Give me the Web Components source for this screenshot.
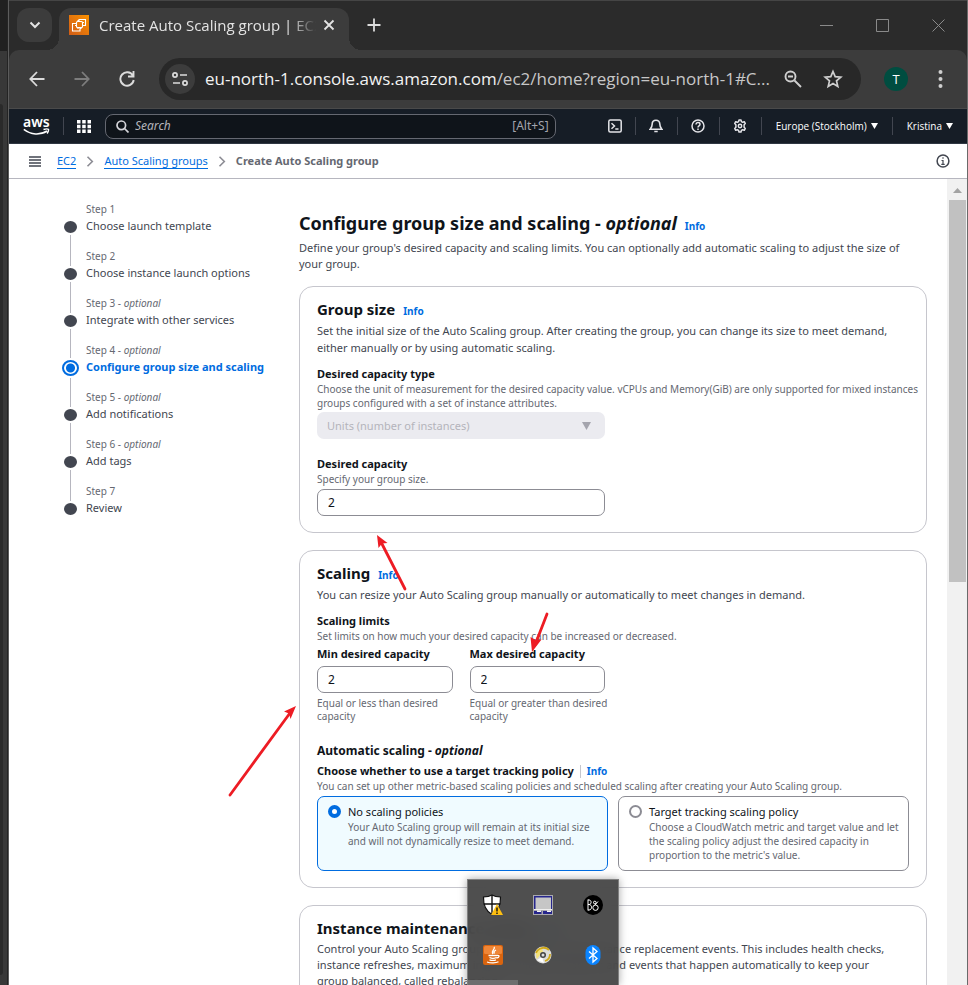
<!DOCTYPE html>
<html lang="en">
<head>
<meta charset="utf-8">
<title>Create Auto Scaling group | EC2</title>
<style>
  html, body { height: 100%; }
  body { margin: 0; overflow: hidden; background: #202020; font: 11px/16px "Noto Sans", "Open Sans", sans-serif; color: #424650; }
</style>
</head>
<body>
<desktop-scene></desktop-scene>

<script>
const define = (name, html, setup) => {
  const tpl = document.createElement('template');
  tpl.innerHTML = '<style>*{box-sizing:border-box} a{color:#006ce0;text-decoration:none} button{font:inherit;color:inherit;background:none;border:0;padding:0;margin:0;display:inline-flex;align-items:center;justify-content:center} svg{display:block;flex:none}</style>' + html;
  customElements.define(name, class extends HTMLElement {
    connectedCallback() {
      if (this.shadowRoot) return;
      const root = this.attachShadow({ mode: 'open' });
      root.append(tpl.content.cloneNode(true));
      if (setup) setup(this, root);
    }
  });
};

/* ---------- browser chrome ---------- */
define('tab-strip', `
<style>
  :host{display:flex;height:50px;background:#2b2b2b;color:#e3e3e3;border-top:1px solid #454545;align-items:flex-end;font:15px/20px "Open Sans",sans-serif}
  .list{width:35px;height:34px;border-radius:12px;background:#3c3c3c;margin:0 7px 8px 8px}
  .tab{position:relative;display:flex;align-items:center;width:290px;height:42px;background:#3c3c3c;border-radius:12px 12px 0 0;padding:0 14px 8px 10px}
  .tab::before,.tab::after{content:"";position:absolute;bottom:0;width:12px;height:12px}
  .tab::before{left:-12px;background:radial-gradient(circle at 0 0,transparent 12px,#3c3c3c 12px)}
  .tab::after{right:-12px;background:radial-gradient(circle at 100% 0,transparent 12px,#3c3c3c 12px)}
  .title{flex:1;margin-left:10px;white-space:nowrap;-webkit-mask-image:linear-gradient(90deg,#000 85%,transparent 97%)}
  .add{margin:0 0 18px 18px}
  .win{margin-left:auto;display:flex;gap:43px;padding:0 22px 18px 0}
</style>
<button class="list" aria-label="Search tabs"><svg width="12" height="8" viewBox="0 0 12 8" fill="none" stroke="#e3e3e3" stroke-width="2"><path d="M1.5 1.5 6 6l4.500-4.500"/></svg></button>
<div class="tab">
  <svg width="20" height="20" viewBox="0 0 20 20"><defs><linearGradient id="g" x1="0" y1="1" x2="1" y2="0"><stop stop-color="#d05c17"/><stop offset="1" stop-color="#fa9100"/></linearGradient></defs><path fill="url(#g)" d="M0 0h20v20H0z"/><g fill="none" stroke="#fff" stroke-width="1.100"><rect x="7.500" y="6.500" width="6" height="6" rx="1"/><path d="M10 6.500V4.500h6.500v6h-3M7.500 8.500h-4V16H11v-3.500M9 5v1.500M9 12.500V14M12 12.500V14M6 10.500h1.500M13.500 7.500H15"/></g></svg>
  <span class="title">Create Auto Scaling group | EC2</span>
  <button aria-label="Close tab"><svg width="12" height="12" viewBox="0 0 12 12" stroke="#e3e3e3" stroke-width="1.800"><path d="m1.500 1.500 9 9m0-9-9 9"/></svg></button>
</div>
<button class="add" aria-label="New tab"><svg width="14" height="14" viewBox="0 0 14 14" stroke="#dcdcdc" stroke-width="1.800"><path d="M7 .5v13M.5 7h13"/></svg></button>
<div class="win">
  <button aria-label="Minimize"><svg width="13" height="13" viewBox="0 0 13 13" stroke="#8a8a8a"><path d="M0 6.500h13"/></svg></button>
  <button aria-label="Maximize"><svg width="13" height="13" viewBox="0 0 13 13" fill="none" stroke="#8a8a8a"><path d="M.5.5h12v12H.5z"/></svg></button>
  <button aria-label="Close"><svg width="13" height="13" viewBox="0 0 13 13" stroke="#8a8a8a"><path d="m.5.5 12 12m0-12-12 12"/></svg></button>
</div>`);

define('address-bar', `
<style>
  :host{display:block;background:#2b2b2b}
  .bar{display:flex;align-items:center;height:59px;background:#3c3c3c;border-radius:10px 10px 0 0;padding:0 22px 1px 20px;border-bottom:1px solid #4a4a4a}
  .nav{display:flex;gap:29px;margin-right:24px}
  .box{flex:1;min-width:0;display:flex;align-items:center;height:42px;background:#282828;border-radius:21px;padding:0 18px 0 6px}
  .site{width:30px;height:30px;border-radius:15px;background:#3c3c3c;margin-right:10px;flex:none}
  .url{flex:1;min-width:0;white-space:nowrap;overflow:hidden;font:17px/26px "Open Sans",sans-serif;color:#c7c7c7}
  .url b{font-weight:400;color:#f2f2f2}
  .tools{display:flex;gap:21px;margin-left:8px}
  .who{width:24px;height:24px;border-radius:12px;background:#004d40;color:#fff;font:13px/24px "Open Sans",sans-serif;margin:0 28px 0 23px}
</style>
<div class="bar">
<div class="nav">
 <button aria-label="Back"><svg width="16" height="16" viewBox="0 0 16 16" fill="none" stroke="#dcdcdc" stroke-width="1.800"><path d="M15.500 8H1.500M8 1 1.300 8 8 15"/></svg></button>
 <button aria-label="Forward"><svg width="16" height="16" viewBox="0 0 16 16" fill="none" stroke="#7d7d7d" stroke-width="1.800"><path d="M.5 8h14M8 1l6.700 7L8 15"/></svg></button>
 <button aria-label="Reload"><svg width="16" height="16" viewBox="0 0 16 16" fill="none" stroke="#dcdcdc" stroke-width="1.900"><path d="M13.800 4.500A6.700 6.700 0 1 0 14.700 9M14.500 0v5.500H9"/></svg></button>
</div>
<div class="box">
 <button class="site" aria-label="Site information"><svg width="16" height="14" viewBox="0 0 16 14" fill="none" stroke="#dcdcdc" stroke-width="1.700"><circle cx="3" cy="3" r="2.100"/><path d="M8 3h7M1 11h7"/><circle cx="13" cy="11" r="2.100"/></svg></button>
 <span class="url"><b>eu-north-1.console.aws.amazon.com</b>/ec2/home?region=eu-north-1#C...</span>
 <div class="tools">
 <button aria-label="Zoom"><svg width="18" height="18" viewBox="0 0 18 18" fill="none" stroke="#cfcfcf" stroke-width="1.900"><circle cx="6.500" cy="6.500" r="5"/><path d="m10.500 10.500 6.500 6.500M4 6.500h5"/></svg></button>
 <button aria-label="Bookmark"><svg width="20" height="20" viewBox="0 0 20 20" fill="none" stroke="#cfcfcf" stroke-width="1.700"><path d="m10 2.500 2.200 5.200 5.600.5-4.300 3.700 1.300 5.500L10 14.500l-4.800 2.900 1.300-5.500-4.300-3.700 5.600-.5z"/></svg></button>
 </div>
</div>
<button class="who" aria-label="Profile">T</button>
<button aria-label="Menu"><svg width="9" height="18" viewBox="0 0 9 18" fill="#cfcfcf"><circle cx="4.500" cy="2" r="2"/><circle cx="4.500" cy="9" r="2"/><circle cx="4.500" cy="16" r="2"/></svg></button>
</div>`);

/* ---------- console header ---------- */
define('console-nav', `
<style>
  :host{display:flex;align-items:center;height:35px;background:#161d26;color:#fff;padding:0 14px 0 14px;border-bottom:1px solid #2f3742;font:500 10px/16px "Open Sans",sans-serif}
  .logo{width:27px;height:22px;color:#fff;font:600 14px/12px "Noto Sans",sans-serif}
  .logo span{display:block;margin-top:1px}
  .sep{width:1px;height:18px;background:#424650;flex:none}
  .grid{margin:0 14px 0 13px}
  .search{flex:1;min-width:0;display:flex;align-items:center;height:25px;border:1px solid #656871;border-radius:8px;background:#0f141a;padding:0 6px 0 10px;margin-right:45px;font-weight:400;color:#a4a4ad}
  input{flex:1;min-width:0;margin-left:6px;padding:0;border:0;outline:0;background:none;font:italic 12px/20px "Noto Sans",sans-serif;color:#b4b4bb}
  input::placeholder{color:#b4b4bb;opacity:1}
  kbd{font:12px/20px "Noto Sans",sans-serif}
  .ico{width:41px;height:20px}
  .drop{gap:4px;white-space:nowrap;height:20px}
  .region{margin:0 14px}
  .user{margin-left:14px}
</style>
<a class="logo" href="#" aria-label="AWS home"><span>aws</span><svg width="27" height="8" viewBox="0 0 27 8" fill="none" stroke="#fff" stroke-width="1.500"><path d="M.8 1.300C8 7 17 7.500 24 3M20.500 1.500c2-.6 4.200-.8 4.800-.2.500.7-.1 2.500-1.200 4.200"/></svg></a>
<i class="sep" style="margin-left:13px"></i>
<button class="grid" aria-label="Services"><svg width="14" height="13" viewBox="0 0 14 13" fill="#fff"><path d="M0 0h3.500v3.400H0zM5.200 0h3.500v3.400H5.200zM10.500 0H14v3.400h-3.500zM0 4.800h3.500v3.400H0zM5.200 4.800h3.500v3.400H5.200zM10.500 4.800H14v3.400h-3.500zM0 9.600h3.500V13H0zM5.200 9.600h3.500V13H5.200zM10.500 9.600H14V13h-3.500z"/></svg></button>
<label class="search"><svg width="13" height="13" viewBox="0 0 13 13" fill="none" stroke="#d5d5da" stroke-width="1.700"><circle cx="5.300" cy="5.300" r="4.300"/><path d="m8.500 8.500 4 4"/></svg><input type="search" placeholder="Search" aria-label="Search"><kbd>[Alt+S]</kbd></label>
<button class="ico" style="width:28px" aria-label="CloudShell"><svg width="14" height="14" viewBox="0 0 14 14" fill="none" stroke="#e4e4e8" stroke-width="1.500"><rect x=".8" y="1" width="12.400" height="12" rx="1.500"/><path d="m3.500 4.200 3 2.800-3 2.800M7.300 10h3.200"/></svg></button>
<i class="sep" style="margin-left:6px"></i>
<button class="ico" aria-label="Notifications"><svg width="14" height="14" viewBox="0 0 14 14" fill="none" stroke="#e4e4e8" stroke-width="1.600"><path d="M7 1.200c-2.300 0-3.800 1.600-3.800 3.800 0 2.500-.8 3.800-2 5.200h11.600c-1.200-1.400-2-2.700-2-5.200C10.800 2.800 9.300 1.200 7 1.200zM5.300 12.500h3.400"/></svg></button>
<i class="sep"></i>
<button class="ico" aria-label="Help"><svg width="14" height="14" viewBox="0 0 14 14" fill="none" stroke="#e4e4e8" stroke-width="1.500"><circle cx="7" cy="7" r="6"/><path d="M5 5.500c0-2.600 4-2.400 4-.2C9 7 7 6.700 7 8.500M7 9.600V11"/></svg></button>
<i class="sep"></i>
<button class="ico" aria-label="Settings"><svg width="14" height="14" viewBox="0 0 14 14" fill="none" stroke="#e4e4e8" stroke-width="1.500" stroke-linejoin="round"><path d="M5.600 2.600 6 1h2l.4 1.600 1.300.7 1.600-.6 1 1.800-1.200 1.200v2.600l1.200 1.200-1 1.800-1.600-.6-1.300.7L8 13H6l-.4-1.600-1.300-.7-1.600.6-1-1.800 1.200-1.200V5.700L1.700 4.500l1-1.800 1.600.6z"/><circle cx="7" cy="7" r="1.700"/></svg></button>
<i class="sep"></i>
<button class="drop region">Europe (Stockholm) <svg width="7" height="6" viewBox="0 0 7 6" fill="#fff"><path d="M0 0h7L3.500 6z"/></svg></button>
<i class="sep"></i>
<button class="drop user">Kristina <svg width="7" height="6" viewBox="0 0 7 6" fill="#fff"><path d="M0 0h7L3.500 6z"/></svg></button>`);

define('crumb-bar', `
<style>
  :host{display:flex;align-items:center;height:35px;background:#fff;border-bottom:1px solid #b6b6bf;padding:0 17px 0 20px;color:#656871}
  nav{display:flex;align-items:center;flex:1;margin-left:16px}
  a{border-bottom:1px solid #006ce0;line-height:14px}
  nav svg{margin:0 10px}
  b{font-weight:700}
</style>
<button aria-label="Open navigation"><svg width="12" height="11" viewBox="0 0 12 11" stroke="#424650" stroke-width="1.400"><path d="M0 1h12M0 4h12M0 7h12M0 10h12"/></svg></button>
<nav aria-label="Breadcrumbs"><a href="#">EC2</a><svg width="8" height="11" viewBox="0 0 8 11" fill="none" stroke="#8c8c94" stroke-width="1.600"><path d="m1.500.8 4.800 4.700-4.800 4.700"/></svg><a href="#">Auto Scaling groups</a><svg width="8" height="11" viewBox="0 0 8 11" fill="none" stroke="#8c8c94" stroke-width="1.600"><path d="m1.500.8 4.800 4.700-4.800 4.700"/></svg><b>Create Auto Scaling group</b></nav>
<button aria-label="Info panel"><svg width="14" height="14" viewBox="0 0 14 14" fill="none" stroke="#424650" stroke-width="1.500"><circle cx="7" cy="7" r="5.900"/><path d="M7 3.300v1.500M5.500 6.500H7v4M5.300 10.400h3.400" stroke-width="1.200"/></svg></button>`);

/* ---------- wizard ---------- */
define('wizard-step', `
<style>
  :host{display:grid;grid-template-columns:16px 1fr;column-gap:8px;height:47px}
  .rail{display:flex;flex-direction:column;align-items:center}
  .up,.down{width:1px;background:#b6b6bf}
  .up{height:17px;margin-bottom:2px}
  .down{flex:1;margin-top:2px}
  .dot{width:13px;height:12px;border-radius:50%;background:#424650}
  .label{font-size:10px;line-height:14px;color:#656871}
  .name{font-size:11px;line-height:20px;color:#424650;white-space:nowrap}
  :host([first]) .up,:host([last]) .down{visibility:hidden}
  :host([current]) .name{color:#006ce0;font-weight:700}
  :host([current]) .dot{width:17px;height:16px;border:2px solid #006ce0;background:radial-gradient(circle,#006ce0 4px,#fff 5px)}
  :host([current]) .up{height:15px}
</style>
<div class="rail"><i class="up"></i><i class="dot"></i><i class="down"></i></div>
<div><div class="label"><slot name="label"></slot></div><div class="name"><slot></slot></div></div>`);

define('info-link', `
<style>:host{display:inline;font-size:10px;line-height:14px;font-weight:700}</style>
<a href="#"><slot>Info</slot></a>`);

define('content-card', `
<style>
  :host{display:block;border:1px solid #c6c6cd;border-radius:14px;background:#fff;padding:11px 17px 16px}
  header{display:flex;align-items:baseline;gap:8px}
  h2{margin:0;font-size:15px;line-height:23px;color:#0f141a;font-weight:700}
  p{margin:1px 0 10px;line-height:17px}
  :host([compact]) p{line-height:16px}
</style>
<header><h2><slot name="title"></slot></h2><info-link></info-link></header>
<p><slot name="description"></slot></p>
<slot></slot>`);

define('field-head', `
<style>
  :host{display:block}
  .l{font-size:11px;line-height:16px;font-weight:700;color:#0f141a;display:flex;align-items:center}
  .h{font-size:10px;line-height:14px;color:#656871;white-space:nowrap}
</style>
<div class="l"><slot></slot></div><div class="h"><slot name="hint"></slot></div>`);

define('text-field', `
<style>
  :host{display:block}
  label{display:block;font-size:11px;line-height:16px;font-weight:700;color:#0f141a}
  .hint{font-size:10px;line-height:14px;color:#656871}
  .note{font-size:10px;line-height:13px;color:#656871;margin-top:4px;white-space:pre}
  input{display:block;width:100%;height:27px;border:1px solid #8c8c94;border-radius:7px;padding:0 10px;margin-top:3px;font:12px/20px "Noto Sans",sans-serif;color:#0f141a;background:#fff;outline:0}
  :host([note]) input{margin-top:4px}
</style>
<label for="i"></label><div class="hint"></div><input id="i" type="text" inputmode="numeric"><div class="note"></div>`,
(host, root) => {
  root.querySelector('label').textContent = host.getAttribute('label');
  root.querySelector('input').value = host.getAttribute('value');
  for (const k of ['hint', 'note']) {
    const el = root.querySelector('.' + k);
    host.hasAttribute(k) ? el.textContent = host.getAttribute(k) : el.remove();
  }
});

define('select-field', `
<style>
  :host{display:block;position:relative}
  select{appearance:none;display:block;width:100%;height:27px;border:0;border-radius:7px;background:#ebebf0;color:#b4b4bb;opacity:1;padding:0 10px;font:11px/20px "Noto Sans",sans-serif}
  svg{position:absolute;right:14px;top:10px}
</style>
<select disabled aria-label="Desired capacity type"><option>Units (number of instances)</option></select>
<svg width="9" height="8" viewBox="0 0 9 8" fill="#a4a4ad"><path d="M0 0h9L4.500 8z"/></svg>`);

define('option-tile', `
<style>
  :host{display:block;min-width:0}
  label{display:grid;grid-template-columns:13px 1fr;column-gap:7px;height:100%;border:1px solid #8c8c94;border-radius:7px;padding:7px 10px 8px;background:#fff}
  input{appearance:none;width:13px;height:13px;margin:1px 0 0;border:2px solid #8c8c94;border-radius:50%;background:#fff}
  input:checked{border:4px solid #006ce0}
  label:has(:checked){border-color:#006ce0;background:#f0fbff}
  .t{font-size:11px;line-height:16px;color:#0f141a}
  .d{font-size:10px;line-height:14px;color:#656871;white-space:nowrap}
</style>
<label><input type="radio" name="policy"><span><div class="t"><slot name="title"></slot></div><div class="d"><slot></slot></div></span></label>`,
(host, root) => { root.querySelector('input').checked = host.hasAttribute('checked'); });

define('scroll-rail', `
<style>
  :host{display:flex;flex-direction:column;align-items:flex-end;background:#f1f1f1;padding-right:1px}
  svg{margin:9px 4px 7px}
  .thumb{width:17px;height:382px;background:#c1c1c1}
</style>
<svg width="9" height="5" viewBox="0 0 9 5" fill="#a3a3a3"><path d="M0 5h9L4.500 0z"/></svg><div class="thumb"></div>`);

define('wizard-page', `
<style>
  :host{flex:1;min-height:0;display:grid;grid-template-columns:minmax(0,1fr) 20px;background:#fff;overflow:hidden}
  .page{display:grid;grid-template-columns:217px minmax(0,1fr);column-gap:20px;padding:0 20px 0 53px;min-height:0;overflow:hidden}
  .steps{padding-top:23px}
  main{display:flex;flex-direction:column;gap:17px;padding-top:32px;min-height:0}
  content-card{flex:none}
  .head{display:flex;align-items:baseline;gap:8px}
  h1{margin:0;font-size:18px;line-height:24px;color:#0f141a;white-space:nowrap}
  .intro{margin:5px 0 -3px}
  .half{width:288px;max-width:100%}
  .pair{display:grid;grid-template-columns:minmax(0,1fr) minmax(0,1fr);gap:17px;margin-top:3px}
  h3{margin:19px 0 4px;font-size:12px;line-height:17px;color:#0f141a}
  .tiles{display:grid;grid-template-columns:1fr 1fr;gap:10px;margin-top:3px}
  .bar{width:1px;height:13px;background:#c6c6cd;margin:0 6px}
  select-field{margin:2px 0 17px}
</style>
<div class="page">
  <nav class="steps" aria-label="Steps">
    <wizard-step first><span slot="label">Step 1</span>Choose launch template</wizard-step>
    <wizard-step><span slot="label">Step 2</span>Choose instance launch options</wizard-step>
    <wizard-step><span slot="label">Step 3 - <i>optional</i></span>Integrate with other services</wizard-step>
    <wizard-step current><span slot="label">Step 4 - <i>optional</i></span>Configure group size and scaling</wizard-step>
    <wizard-step><span slot="label">Step 5 - <i>optional</i></span>Add notifications</wizard-step>
    <wizard-step><span slot="label">Step 6 - <i>optional</i></span>Add tags</wizard-step>
    <wizard-step last><span slot="label">Step 7</span>Review</wizard-step>
  </nav>
  <main>
    <div>
      <div class="head"><h1>Configure group size and scaling - <i>optional</i></h1><info-link></info-link></div>
      <p class="intro">Define your group's desired capacity and scaling limits. You can optionally add automatic scaling to adjust the size of<br>your group.</p>
    </div>
    <content-card>
      <span slot="title">Group size</span>
      <span slot="description">Set the initial size of the Auto Scaling group. After creating the group, you can change its size to meet demand, either manually or by using automatic scaling.</span>
      <field-head>Desired capacity type<span slot="hint">Choose the unit of measurement for the desired capacity value. vCPUs and Memory(GiB) are only supported for mixed instances<br>groups configured with a set of instance attributes.</span></field-head>
      <select-field class="half"></select-field>
      <text-field class="half" label="Desired capacity" hint="Specify your group size." value="2"></text-field>
    </content-card>
    <content-card>
      <span slot="title">Scaling</span>
      <span slot="description">You can resize your Auto Scaling group manually or automatically to meet changes in demand.</span>
      <field-head>Scaling limits<span slot="hint">Set limits on how much your desired capacity can be increased or decreased.</span></field-head>
      <div class="half pair">
        <text-field label="Min desired capacity" value="2" note="Equal or less than desired&#10;capacity"></text-field>
        <text-field label="Max desired capacity" value="2" note="Equal or greater than desired&#10;capacity"></text-field>
      </div>
      <h3>Automatic scaling - <i>optional</i></h3>
      <field-head>Choose whether to use a target tracking policy<span class="bar"></span><info-link></info-link><span slot="hint">You can set up other metric-based scaling policies and scheduled scaling after creating your Auto Scaling group.</span></field-head>
      <div class="tiles">
        <option-tile checked><span slot="title">No scaling policies</span>Your Auto Scaling group will remain at its initial size<br>and will not dynamically resize to meet demand.</option-tile>
        <option-tile><span slot="title">Target tracking scaling policy</span>Choose a CloudWatch metric and target value and let<br>the scaling policy adjust the desired capacity in<br>proportion to the metric's value.</option-tile>
      </div>
    </content-card>
    <content-card compact>
      <span slot="title">Instance maintenance policy</span>
      <span slot="description">Control your Auto Scaling group's availability during instance replacement events. This includes health checks,<br>instance refreshes, maximum instance lifetime features and events that happen automatically to keep your<br>group balanced, called rebalancing.</span>
    </content-card>
  </main>
</div>
<scroll-rail></scroll-rail>`);

/* ---------- overlays ---------- */
define('tray-popup', `
<style>
  :host{position:absolute;left:467px;bottom:0;width:152px;height:106px;border:1px solid #808080;border-bottom:0;background:rgba(66,66,66,.93);backdrop-filter:blur(9px);overflow:hidden;box-shadow:0 0 8px rgba(0,0,0,.35)}
  .icons{display:grid;grid-template-columns:repeat(3,50px);grid-auto-rows:50px}
  .peek{width:50px;height:5px;background:#6e6e6e}
</style>
<div class="icons">
<button aria-label="Windows Security"><svg width="22" height="22" viewBox="0 0 22 22"><path d="M10 1c2.500 1.500 5 2 8.500 2 .3 8.500-2 14-8.500 17.500C3.500 17 1.200 11.500 1.500 3 5 3 7.500 2.500 10 1z" fill="#fff" stroke="#111" stroke-width="1.200"/><path d="M10 1v19M1.800 10h16.500" stroke="#111" stroke-width="1.400"/><path d="m15 10 6 11H9z" fill="#fdbf11"/><path d="M15 13.500v4M15 18.500V20" stroke="#111" stroke-width="1.400"/></svg></button>
<button aria-label="Display"><svg width="20" height="20" viewBox="0 0 20 20"><path fill="#a9a9ae" d="M0 0h20v20H0z"/><path fill="#26268c" d="M1 1h18v13.500H1z"/><path fill="#c6c6c6" d="M2.500 2.500H18V14H2.500z"/><path d="M1 14.500h18" stroke="#eee"/><path fill="#26268c" d="M1 16h7.500v3H1zM10 16h9v3h-9z"/><path fill="#f4f4f4" d="M4 15.500h4V17H4zM14 15.500h4V17h-4z"/></svg></button>
<button aria-label="B&amp;O audio"><svg width="20" height="20" viewBox="0 0 20 20"><circle cx="10" cy="10" r="10"/><g fill="none" stroke="#fff" stroke-width="1"><path d="M5 4.500v11M5 5h1c2.800 0 2.800 4.500 0 4.500H5h1c3.400 0 3.400 5.500 0 5.500H5"/><circle cx="12.500" cy="12.700" r="2.700"/><circle cx="11.800" cy="7.500" r="1.300"/><path d="m15 6.500-3 3.500"/></g></svg></button>
<button aria-label="Java"><svg width="20" height="20" viewBox="0 0 20 20"><rect width="20" height="20" rx="2" fill="#d9640f"/><rect x="1" y="1" width="18" height="8" rx="1.500" fill="#ef8637"/><g fill="none" stroke="#fff" stroke-width="1.300"><path d="M11 2c2 2-3.500 3.500-1 7M13 5c-2 1-2.500 2-1.500 3.500M5.500 10.500h8.500M6.500 12.500c2 1 5 1 7 0M6.500 14.800c2 .8 4.500.8 6.500 0M4 17c3.500 1.300 9 1.200 11.500-.2M14 10.500c3-.8 2.500 2-.5 2.500"/></g></svg></button>
<button aria-label="Disc"><svg width="18" height="18" viewBox="0 0 18 18"><circle cx="9" cy="9" r="8.500" fill="#dcdcda"/><path d="M3 13A7.500 7.500 0 0 1 8 2l1 4a3 3 0 0 0-3 3z" fill="#f4e27a"/><path d="M2 7a8 8 0 0 1 13-3M16 8c0 4-2 6-5 7" stroke="#d0a91a" stroke-width="1.800" fill="none"/><path d="m3 14 5-3 2 6z" fill="#fff"/><circle cx="9" cy="9" r="3" fill="#444"/><circle cx="9" cy="9" r="1.500" fill="#ddd"/></svg></button>
<button aria-label="Bluetooth"><svg width="16" height="20" viewBox="0 0 16 20"><rect x=".5" width="15" height="20" rx="7.500" fill="#0a84ff"/><path d="m4 6.500 8 7-4 3.500V3l4 3.500-8 7" fill="none" stroke="#fff" stroke-width="1.300"/></svg></button>
</div><div class="peek"></div>`);

define('markup-arrows', `
<style>:host{position:absolute;inset:0;pointer-events:none}</style>
<svg width="968" height="985" viewBox="0 0 968 985" stroke="#ed1c24" stroke-width="2.800" fill="#ed1c24" stroke-linecap="round">
<path d="M405 589 381 542"/><path stroke="none" d="m377 535 10.500 8-5.500.5-3.500 4.500z"/>
<path d="m547 614-12 31"/><path stroke="none" d="m532 652-1.500-15 5 3 6-.5z"/>
<path d="m230 795 60-82"/><path stroke="none" d="m296 706-12 5.500 5 2 1.500 5.500z"/>
</svg>`);

define('desktop-scene', `
<style>
  :host{position:relative;display:grid;grid-template-columns:8px minmax(0,1fr);height:100vh;overflow:hidden}
  .behind{background:linear-gradient(#202020 51px,#383838 51px);border-right:1px solid #242424;padding-top:104px;display:flex}
  .behind i{flex:1;margin:0 4px 10px 0;background:#2a2a2a;border-radius:0 6px 6px 0}
  .window{display:flex;flex-direction:column;min-height:0;border-left:1px solid #5c5c5c;border-right:1px solid #6a6a6a}
  tab-strip,address-bar,console-nav,crumb-bar{flex:none}
</style>
<div class="behind"><i></i></div>
<div class="window">
  <tab-strip></tab-strip><address-bar></address-bar><console-nav></console-nav><crumb-bar></crumb-bar><wizard-page></wizard-page>
</div>
<tray-popup></tray-popup>
<markup-arrows></markup-arrows>`);
</script>
</body>
</html>
